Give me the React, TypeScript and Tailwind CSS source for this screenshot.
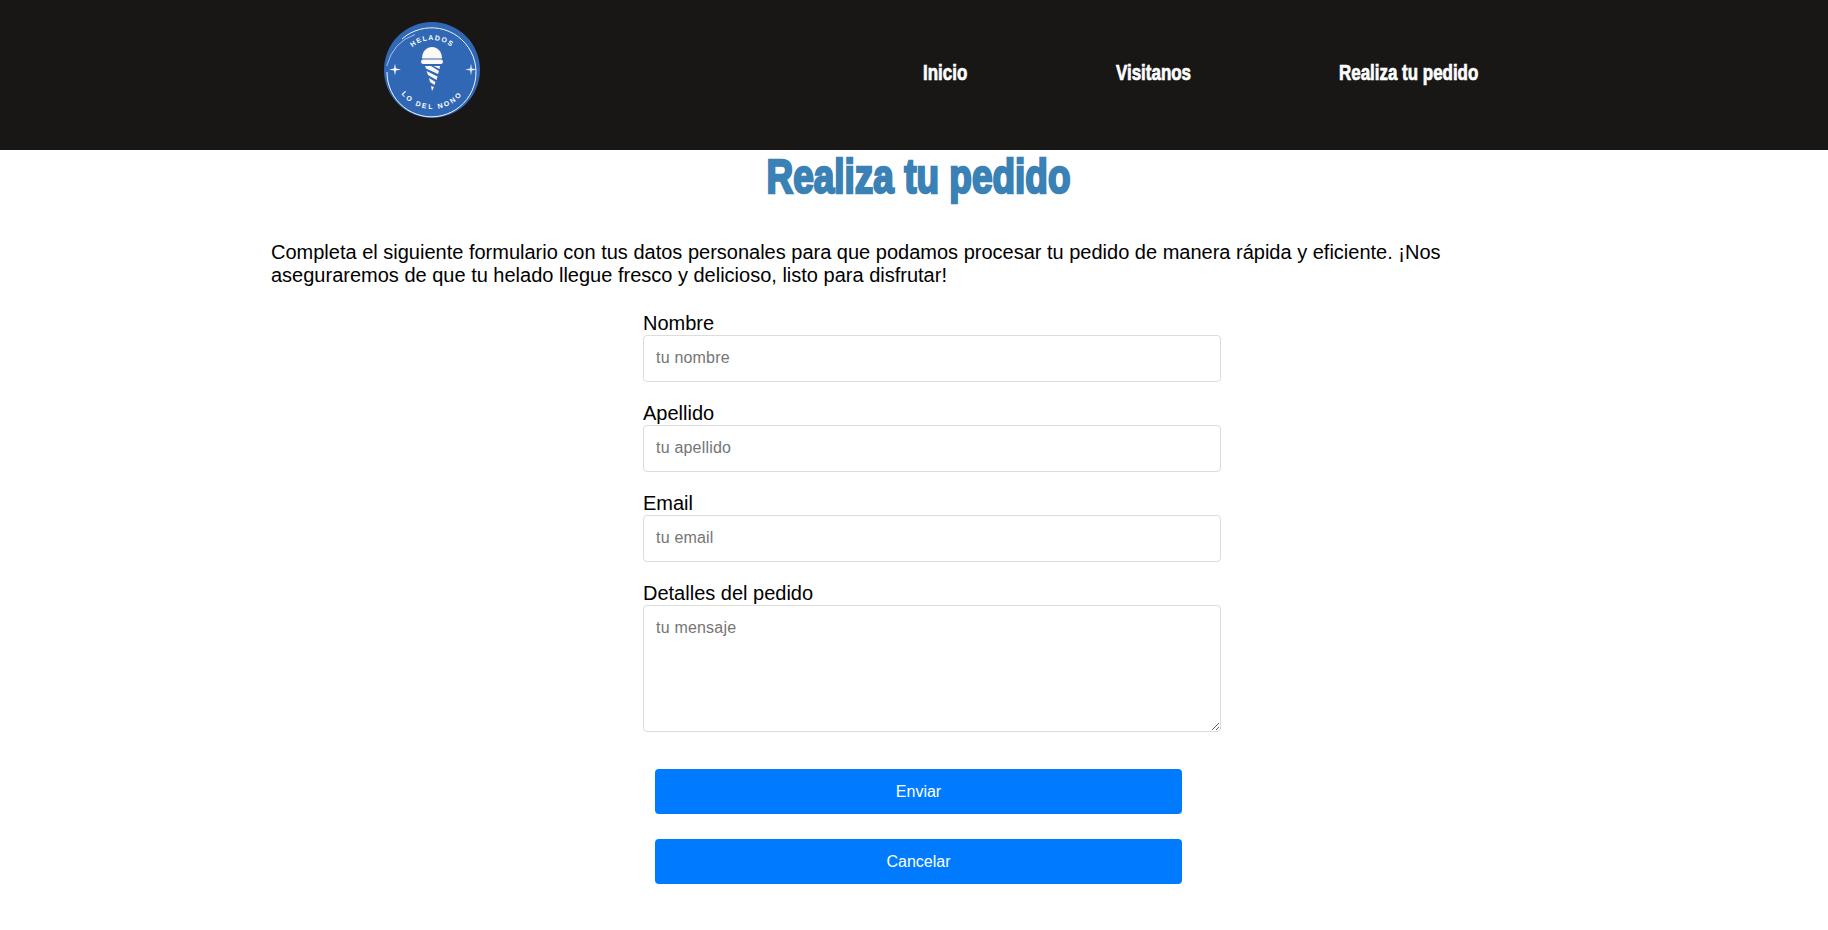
const Logo = () => (
  <svg viewBox="0 0 96 96" className="h-[96px] w-[96px]">
    <defs>
      <path id="arc-top" d="M18 48 A30 30 0 0 1 78 48" />
      <path id="arc-bottom" d="M9 48 A39 39 0 0 0 87 48" />
    </defs>
    <circle cx="48" cy="48" r="48" fill="#3068b5" />
    <path d="M18 17 A44.5 44.5 0 1 1 3 50" fill="none" stroke="#eef3fa" strokeWidth="1" />
    <path d="M2.7 44 Q9 20 31 12.5" fill="none" stroke="#dfe8f6" strokeWidth="0.7" />
    <path d="M38 36.5 C38 21 58 21 58 36.5 Z" fill="#fbf8f6" />
    <rect x="37" y="37.5" width="22" height="4.5" rx="2.2" fill="#fbf8f6" />
    <path d="M41 44 L47 44 L55 49 L54 52 L42 46.5 Z M49.5 44 L56 44 L55.5 47 Z M42.5 49 L53.5 54.5 L52.5 58 L44 53 Z M45 56 L51.5 60 L50.5 63 L46 60 Z M47 64 L50 65 L48 69 Z" fill="#fbf8f6" />
    <path d="M11 41.5 L11.9 46.6 L17 47.5 L11.9 48.4 L11 53.5 L10.1 48.4 L5 47.5 L10.1 46.6 Z" fill="#ffffff" />
    <path d="M87 41.5 L87.9 46.6 L93 47.5 L87.9 48.4 L87 53.5 L86.1 48.4 L81 47.5 L86.1 46.6 Z" fill="#dfe8f6" />
    <text fill="#fff" fontSize="7" fontWeight="700" letterSpacing="1.2" textAnchor="middle" fontFamily="'Liberation Sans', sans-serif">
      <textPath href="#arc-top" startOffset="50%">HELADOS</textPath>
    </text>
    <text fill="#fff" fontSize="7" fontWeight="700" letterSpacing="2" textAnchor="middle" fontFamily="'Liberation Sans', sans-serif">
      <textPath href="#arc-bottom" startOffset="50%">LO DEL NONO</textPath>
    </text>
  </svg>
);

const fields = [
  { label: "Nombre", placeholder: "tu nombre" },
  { label: "Apellido", placeholder: "tu apellido" },
  { label: "Email", placeholder: "tu email" },
];

const NavLink = ({ text, width }: { text: string; width: string }) => (
  <div className={width}>
    <a className="inline-block origin-left scale-x-[0.77] whitespace-nowrap">{text}</a>
  </div>
);

export default function App() {
  return (
    <div className="min-h-[930px] bg-white font-['Liberation_Sans',sans-serif] text-[20px] leading-[23px] text-black">
      <header className="flex h-[150px] items-start bg-[#191716]">
        <div className="ml-[384px] mt-[22px]">
          <Logo />
        </div>
        <nav className="ml-[443px] mt-[60px] flex text-[22px] leading-[25px] font-bold text-white [-webkit-text-stroke:0.7px_white]">
          <NavLink text="Inicio" width="w-[193px]" />
          <NavLink text="Visitanos" width="w-[223px]" />
          <NavLink text="Realiza tu pedido" width="w-[200px]" />
        </nav>
      </header>

      <main>
        <h1 className="ml-[9px] mt-[4px] scale-x-[0.77] text-center text-[48px] leading-[46px] font-bold text-[#3a81b5] [-webkit-text-stroke:2.5px_#3a81b5]">
          Realiza tu pedido
        </h1>

        <p className="ml-[271px] mt-[41px] w-[1200px]">
          Completa el siguiente formulario con tus datos personales para que podamos procesar tu pedido de manera rápida y eficiente. ¡Nos aseguraremos de que tu helado llegue fresco y delicioso, listo para disfrutar!
        </p>

        <form className="ml-[643px] mt-[25px] w-[578px]">
          {fields.map((field) => (
            <div key={field.label} className="mb-[20px]">
              <label className="block">{field.label}</label>
              <input
                placeholder={field.placeholder}
                className="block h-[47px] w-full rounded-[4px] border border-[#dcdcdc] px-3 pb-[2px] text-[16px] tracking-[0.2px] outline-none placeholder:text-[#757575]"
              />
            </div>
          ))}
          <div>
            <label className="block">Detalles del pedido</label>
            <textarea
              placeholder="tu mensaje"
              className="block h-[127px] w-full rounded-[4px] border border-[#dcdcdc] px-3 py-[10px] text-[16px] tracking-[0.2px] outline-none placeholder:text-[#757575]"
            />
          </div>
          <div className="-ml-[643px] mt-[37px] flex flex-col gap-[25px] pl-[655px]">
            <button type="button" className="h-[45px] w-[527px] rounded-[4px] bg-[#007bff] text-[16px] text-white">Enviar</button>
            <button type="button" className="h-[45px] w-[527px] rounded-[4px] bg-[#007bff] text-[16px] text-white">Cancelar</button>
          </div>
        </form>
      </main>
    </div>
  );
}
